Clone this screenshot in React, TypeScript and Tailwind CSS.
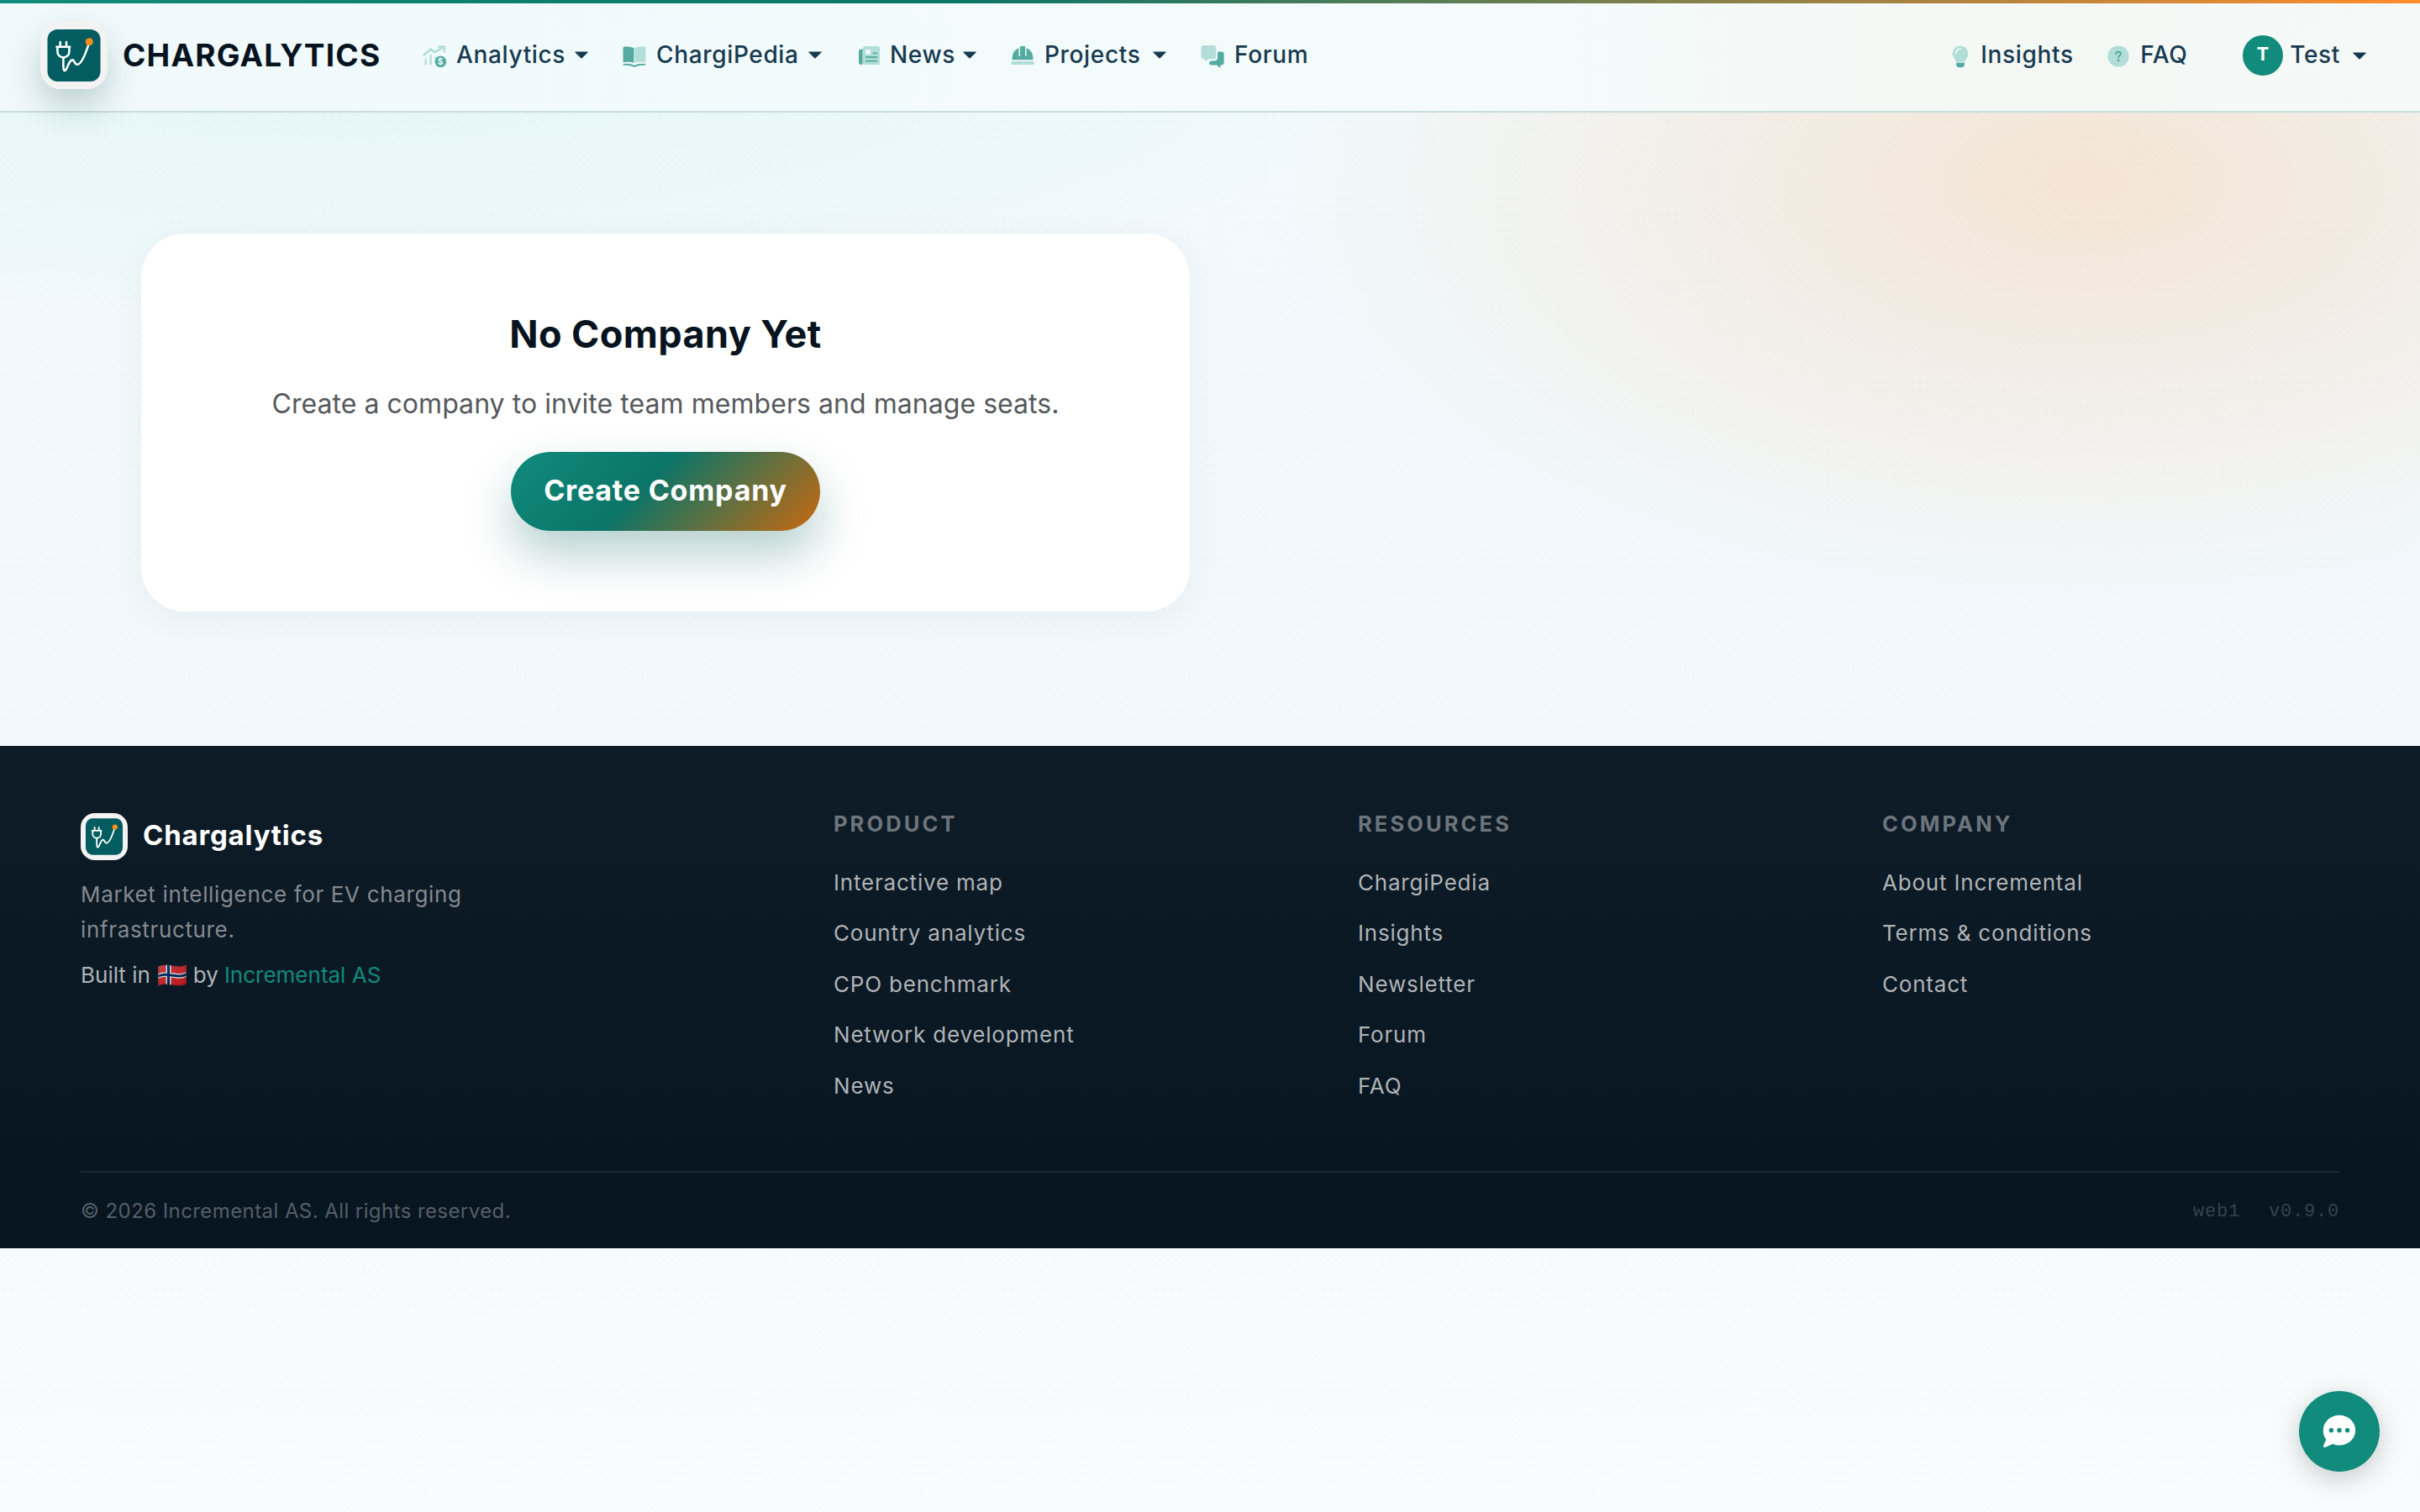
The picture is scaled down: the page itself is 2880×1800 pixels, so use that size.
import type { ReactNode } from 'react';

type NavItem = {
  label: string;
  icon: ReactNode;
  width: string;
  dropdown?: boolean;
};

const LIGHT = '#b2ddd8';
const DARK = '#54aca0';

function ChartIcon() {
  return (
    <svg viewBox="0 0 28 27" className="w-7 h-[27px]" fill="none" strokeLinecap="round" strokeLinejoin="round">
      <path d="M1.6 11.4 9.8 4.4l4.8 3.8L24.2 2.4M19.6 1.6h6.2v5.6" stroke={LIGHT} strokeWidth="2.6" />
      <path d="M3.6 17v5.2M9.6 12v10.2M15.4 14.6v1" stroke={LIGHT} strokeWidth="2.4" />
      <circle cx="21.4" cy="19.4" r="6.8" fill={DARK} />
      <text x="21.4" y="23" textAnchor="middle" fontSize="10" fontWeight="700" fontFamily="Inter" fill="#f0fafa">
        $
      </text>
    </svg>
  );
}

function BookIcon() {
  return (
    <svg viewBox="0 0 29 27" className="w-[29px] h-[27px]">
      <path d="M.6 3C.6 1.900 1.400 1.200 2.500 1.200 7 1 11 1.400 14 3v18.200C10.500 19.900 6.500 19.800.6 20.400Z" fill={DARK} />
      <path d="M28.400 3c0-1.100-.8-1.800-1.900-1.800C22 1 18.200 1.400 15 3v18.200c3.500-1.300 7.500-1.400 13.400-.8Z" fill={LIGHT} />
      <path d="M1.600 23.200c5-.6 9 0 12.900 2 3.900-2 7.900-2.600 12.900-2" stroke={DARK} strokeWidth="2" fill="none" strokeLinecap="round" />
    </svg>
  );
}

function NewspaperIcon() {
  return (
    <svg viewBox="0 0 28 27" className="w-7 h-[27px]">
      <path d="M7 4.600H5.400A2.400 2.400 0 0 0 3 7v13.600A2.400 2.400 0 0 0 5.400 23C7 23 7.600 21.800 7.600 20.600V4.600Z" fill={DARK} />
      <path d="M10.600 1h14.800A2.600 2.600 0 0 1 28 3.600v16.800a2.600 2.600 0 0 1-2.600 2.600H7c.8-.8 1-1.600 1-2.600V3.600A2.600 2.600 0 0 1 10.600 1Z" fill={LIGHT} />
      <rect x="11" y="5" width="6" height="5.600" rx="1" fill="#f1fafb" />
      <path d="M20.600 9.400h3.600M11.800 14h12.400M11.800 18.600h12.400" stroke={DARK} strokeWidth="1.800" strokeLinecap="round" />
    </svg>
  );
}

function HardHatIcon() {
  return (
    <svg viewBox="0 0 28 27" className="w-7 h-[27px]">
      <path
        d="M10.900 2.200c0-.7.500-1.200 1.200-1.200h3.800c.7 0 1.200.5 1.200 1.200v10.600h1.500V3.200C23 4.800 26.400 9 26.400 16v1.300H1.600V16C1.600 9 5 4.800 9.400 3.200v9.600h1.500Z"
        fill={DARK}
      />
      <rect x=".2" y="19" width="27.600" height="4" rx="2" fill={LIGHT} />
    </svg>
  );
}

function CommentsIcon() {
  return (
    <svg viewBox="0 0 29 29" className="w-[29px] h-[29px]">
      <path d="M3.800.6h12A3.200 3.200 0 0 1 19 3.800v10.400a3.200 3.200 0 0 1-3.200 3.200H10l-4.600 3.400v-3.400H3.800a3.200 3.200 0 0 1-3.200-3.200V3.800A3.200 3.200 0 0 1 3.800.6Z" fill={LIGHT} />
      <path d="M20.800 8.200h4.600a3.200 3.200 0 0 1 3.200 3.200v10.200a3.200 3.200 0 0 1-3.200 3.200h-1.200v3.600l-4.800-3.600h-6a3 3 0 0 1-3-3v-.6l2-1.600h4.200a4.200 4.200 0 0 0 4.200-4.200Z" fill={DARK} />
    </svg>
  );
}

function BulbIcon() {
  return (
    <svg viewBox="0 0 20 27" className="w-5 h-[27px]">
      <path d="M10 .4a9.400 9.400 0 0 1 9.400 9.400c0 4.200-3.600 6.600-4.400 10.200H5C4.200 16.400.6 14 .6 9.800A9.400 9.400 0 0 1 10 .4Z" fill={LIGHT} />
      <path d="M4.400 9.800A5.600 5.600 0 0 1 10 4.200" stroke="#f4f9f7" strokeWidth="1.800" fill="none" strokeLinecap="round" />
      <path d="M5 20.800h10v1.400a4 4 0 0 1-4 4H9a4 4 0 0 1-4-4Z" fill={DARK} />
    </svg>
  );
}

function QuestionIcon() {
  return (
    <svg viewBox="0 0 26 26" className="w-[26px] h-[26px]">
      <circle cx="13" cy="13" r="12.600" fill={LIGHT} />
      <path d="M10.200 10.200c.2-1.600 1.300-2.400 2.900-2.400 1.700 0 2.800 1 2.800 2.400 0 2.200-2.800 2-2.800 4.400" stroke={DARK} strokeWidth="2" fill="none" strokeLinecap="round" />
      <circle cx="13.100" cy="18" r="1.400" fill={DARK} />
    </svg>
  );
}

function Caret() {
  return (
    <svg viewBox="0 0 16 9" className="w-4 h-[9px] shrink-0">
      <path d="M.8.500h14.400c.5 0 .7.500.3.900L8.600 8.200a.8.800 0 0 1-1.200 0L.5 1.400C.1 1 .3.500.8.500Z" fill="#173a50" />
    </svg>
  );
}

function Logo({ className }: { className: string }) {
  return (
    <svg viewBox="0 0 80 80" className={className}>
      <rect width="80" height="80" rx="24" fill="#f3f3f3" />
      <rect x="8.500" y="9" width="63" height="62" rx="12" fill="#035c60" />
      <g fill="none" stroke="#fff" strokeWidth="2.600" strokeLinecap="round" strokeLinejoin="round">
        <path d="M23.700 24v5M31 24v5M19.400 29.800h15.800M20.400 30v5.500a7 7 0 0 0 14 0V30" />
        <path d="M27.400 42.600c0 6-.6 15.600 1.600 15.600 3 0 4.600-13 9.200-12.800 2.400.1 2.600 5.400 5.600 5.400 5 0 9.400-11 13.600-24" />
      </g>
      <circle cx="58.300" cy="23.700" r="4.500" fill="#f78f1e" />
    </svg>
  );
}

const navItems: NavItem[] = [
  { label: 'Analytics', icon: <ChartIcon />, width: 'w-[238px]', dropdown: true },
  { label: 'ChargiPedia', icon: <BookIcon />, width: 'w-[278px]', dropdown: true },
  { label: 'News', icon: <NewspaperIcon />, width: 'w-[184px]', dropdown: true },
  { label: 'Projects', icon: <HardHatIcon />, width: 'w-[226px]', dropdown: true },
  { label: 'Forum', icon: <CommentsIcon />, width: 'w-[170px]' },
];

const footerColumns = [
  {
    title: 'PRODUCT',
    links: ['Interactive map', 'Country analytics', 'CPO benchmark', 'Network development', 'News'],
  },
  { title: 'RESOURCES', links: ['ChargiPedia', 'Insights', 'Newsletter', 'Forum', 'FAQ'] },
  { title: 'COMPANY', links: ['About Incremental', 'Terms & conditions', 'Contact'] },
];

function Header() {
  return (
    <header className="h-[134px] border-b-2 border-[#c9dddf] bg-[linear-gradient(90deg,#f0f9fb_0%,#f2fbfc_35%,#f4fbfa_60%,#f4f8f5_85%,#f5f9f8_100%)]">
      <div className="h-1 bg-[linear-gradient(90deg,#0f8b7c_0%,#0b7568_40%,#ff8c2b_100%)]" />
      <div className="flex items-center h-[120px] mt-px pl-12 pr-16 text-[28px] font-medium tracking-[0.65px] text-[#173a50]">
        {/* Brand */}
        <a className="flex items-center w-[455px] mt-[2px]">
          <Logo className="w-20 h-20 rounded-[24px] shadow-[0_20px_40px_rgba(8,70,75,0.22)]" />
          <span className="ml-[18px] -mt-[2px] text-[37px] leading-none font-bold tracking-[1.2px] text-[#071420]">
            CHARGALYTICS
          </span>
        </a>

        {/* Main navigation */}
        <nav className="flex items-center">
          {navItems.map((item) => (
            <a key={item.label} className={`flex items-center ${item.width}`}>
              <span className="flex w-7 mr-[12px] mt-[4px] shrink-0">{item.icon}</span>
              <span>{item.label}</span>
              {item.dropdown && (
                <span className="ml-auto mr-[41px]">
                  <Caret />
                </span>
              )}
            </a>
          ))}
        </nav>

        {/* Secondary links and account */}
        <div className="flex items-center ml-auto">
          <a className="flex items-center w-[185px]">
            <span className="mr-[14px] mt-[4px]"><BulbIcon /></span>
            Insights
          </a>
          <a className="flex items-center w-[161px]">
            <span className="mr-[13px] mt-[4px]"><QuestionIcon /></span>
            FAQ
          </a>
          <a className="flex items-center">
            <span className="flex items-center justify-center w-12 h-12 mt-[2px] rounded-full bg-[#108b7c] text-white text-[22px] font-bold pb-[3px]">
              T
            </span>
            <span className="ml-[8px]">Test</span>
            <span className="ml-[15px] mt-[2px]"><Caret /></span>
          </a>
        </div>
      </div>
    </header>
  );
}

function EmptyCompanyCard() {
  return (
    <section className="flex flex-col items-center w-[1248px] h-[450px] pt-[92px] rounded-[52px] bg-white shadow-[0_8px_40px_rgba(13,60,80,0.05)]">
      <h1 className="text-[45px] leading-[56px] font-bold tracking-[0.4px] text-[#071420]">No Company Yet</h1>
      <p className="mt-[35px] text-[32px] leading-[40px] tracking-[0.05px] text-[#55595d]">
        Create a company to invite team members and manage seats.
      </p>
      <button className="w-[368px] h-[94px] mt-[37px] pb-1 rounded-full text-[34px] font-bold tracking-[0.8px] text-white bg-[linear-gradient(135deg,#108b7c_0%,#0b7568_43%,#c9690f_100%)] shadow-[0_28px_56px_rgba(11,100,92,0.3)]">
        Create Company
      </button>
    </section>
  );
}

function Footer() {
  return (
    <footer className="h-[598px] px-24 pt-20 bg-[linear-gradient(180deg,#0e1c28_0%,#071521_100%)] text-[26px]">
      <div className="grid grid-cols-[1.5fr_1fr_1fr_1fr] gap-20 h-[354px]">
        <div>
          <div className="flex items-center gap-[18px]">
            <Logo className="w-14 h-14" />
            <span className="-mt-[3px] text-[33px] leading-none font-bold tracking-[0.8px] text-white">Chargalytics</span>
          </div>
          <p className="w-[520px] mt-[20px] leading-[42px] tracking-[0.65px] text-[#848a8f]">
            Market intelligence for EV charging infrastructure.
          </p>
          <p className="flex items-center mt-[12px] h-10 text-[#afb3b6]">
            Built in
            <span className="w-[36px] ml-[8px] text-[29px] leading-none opacity-80">🇳🇴</span>
            <span className="ml-[7px]">by</span>
            <a className="ml-[7px] text-[#108b7c]">Incremental AS</a>
          </p>
        </div>
        {footerColumns.map((column) => (
          <div key={column.title}>
            <h2 className="text-[25.5px] leading-[26px] font-bold tracking-[3.1px] text-[#6d757c]">{column.title}</h2>
            <ul className="mt-[27px] tracking-[0.8px] text-[#afb3b6]">
              {column.links.map((link) => (
                <li key={link} className="leading-[60.4px]">{link}</li>
              ))}
            </ul>
          </div>
        ))}
      </div>
      <div className="flex items-center justify-between mt-[72px] pt-[28px] border-t-2 border-[#1c2935] leading-8">
        <span className="text-[24px] tracking-[0.42px] text-[#555e66]">© 2026 Incremental AS. All rights reserved.</span>
        <span className="flex gap-[34px] mt-[3px] font-['Liberation_Mono',monospace] text-[22px] tracking-[0.8px] text-[#36424c]">
          <span>web1</span>
          <span>v0.9.0</span>
        </span>
      </div>
    </footer>
  );
}

function ChatButton() {
  return (
    <button className="fixed right-12 bottom-12 flex items-center justify-center w-24 h-24 rounded-full bg-[#108b7c] shadow-[0_8px_32px_rgba(0,0,0,0.2)]">
      <svg viewBox="0 0 40 40" className="w-10 h-10">
        <path
          d="M20 .8c10.600 0 19.200 8 19.200 17.900S30.600 36.600 20 36.600c-2.800 0-5.400-.5-7.800-1.500L3.200 39c-1.500.6-2.700-.8-2.100-2.200l3.200-7.200A16.900 16.900 0 0 1 .8 18.700C.8 8.800 9.400.8 20 .8Z"
          fill="#fff"
        />
        <g fill="#108b7c">
          <circle cx="10.400" cy="18.700" r="2.700" />
          <circle cx="20" cy="18.700" r="2.700" />
          <circle cx="29.600" cy="18.700" r="2.700" />
        </g>
      </svg>
    </button>
  );
}

export default function App() {
  return (
    <div className="h-[1800px] overflow-hidden font-['Inter',sans-serif] bg-[radial-gradient(950px_500px_at_2480px_215px,rgba(255,150,70,0.21),rgba(255,150,70,0)),radial-gradient(1300px_340px_at_400px_60px,rgba(16,190,160,0.06),rgba(16,190,160,0)),linear-gradient(180deg,#f1fafc_0%,#f2f8fb_50%,#f8fcfc_100%)]">
      <div className="h-full bg-[radial-gradient(circle_at_5px_5px,rgba(7,40,60,0.035)_1px,transparent_1.5px)] bg-[size:10px_10px]">
        <Header />
        <main className="h-[754px] pl-[168px] pt-36">
          <EmptyCompanyCard />
        </main>
        <Footer />
        <ChatButton />
      </div>
    </div>
  );
}
